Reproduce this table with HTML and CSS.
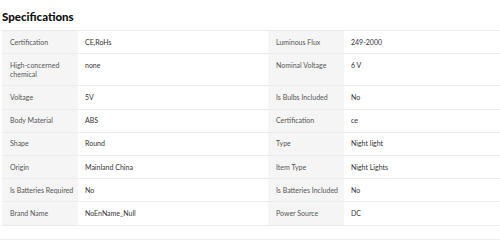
FILE: index.html
```html
<!DOCTYPE html>
<html>
<head>
<meta charset="utf-8">
<link rel="stylesheet" href="styles.css">
</head>
<body>
<div class="page">
  <h2 class="title">Specifications</h2>
  <table class="specs">
    <tr><td class="k">Certification</td><td class="v">CE,RoHs</td><td class="k">Luminous Flux</td><td class="v">249-2000</td></tr>
    <tr><td class="k">High-concerned chemical</td><td class="v">none</td><td class="k">Nominal Voltage</td><td class="v">6 V</td></tr>
    <tr><td class="k">Voltage</td><td class="v">5V</td><td class="k">Is Bulbs Included</td><td class="v">No</td></tr>
    <tr><td class="k">Body Material</td><td class="v">ABS</td><td class="k">Certification</td><td class="v">ce</td></tr>
    <tr><td class="k">Shape</td><td class="v">Round</td><td class="k">Type</td><td class="v">Night light</td></tr>
    <tr><td class="k">Origin</td><td class="v">Mainland China</td><td class="k">Item Type</td><td class="v">Night Lights</td></tr>
    <tr><td class="k">Is Batteries Required</td><td class="v">No</td><td class="k">Is Batteries Included</td><td class="v">No</td></tr>
    <tr><td class="k">Brand Name</td><td class="v">NoEnName_Null</td><td class="k">Power Source</td><td class="v">DC</td></tr>
  </table>
  <div class="divider"></div>
</div>
</body>
</html>
```
FILE: styles.css
```css
html, body {
  margin: 0;
  padding: 0;
  background: #fff;
  overflow: hidden;
}
.page {
  width: 500px;
  height: 240px;
  overflow: hidden;
  font-family: Lato, "Open Sans", sans-serif;
  color: #222;
}
.title {
  margin: 0;
  padding: 9px 0 0 2px;
  height: 21px;
  font-size: 11.5px;
  font-weight: 900;
  line-height: 16px;
  color: #111;
}
.specs {
  margin-left: 2px;
  border-collapse: collapse;
  table-layout: fixed;
  width: 532px;
  font-size: 7px;
  line-height: 9px;
}
.specs tr {
  border-top: 1px solid #ececec;
  border-bottom: 1px solid #ececec;
}
.specs td {
  vertical-align: top;
  padding: 6.6px 7px 6.6px 7px;
}
.specs td.k {
  width: 66px;
  background: #f5f5f5;
  color: #555;
  padding-left: 8px;
  padding-right: 2px;
}
.specs td.v {
  width: 176px;
  color: #333;
}
.divider {
  margin-top: 13px;
  border-top: 1px solid #ececec;
}
```
